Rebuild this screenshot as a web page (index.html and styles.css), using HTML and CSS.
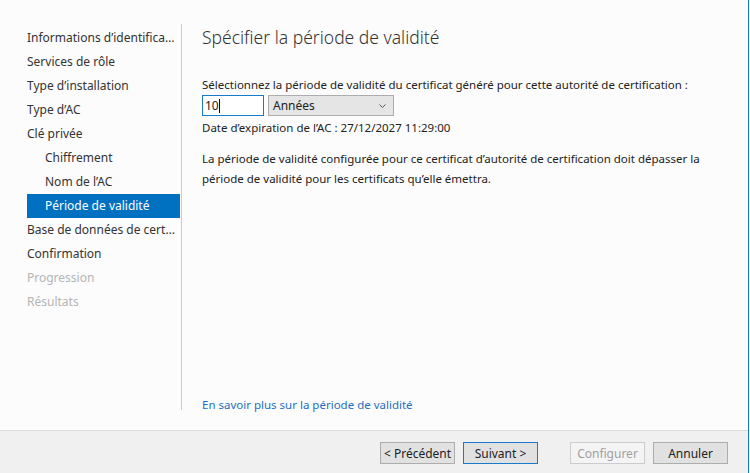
FILE: index.html
```html
<!DOCTYPE html>
<html lang="fr">
<head>
    <meta charset="UTF-8">
    <title>Configuration AD CS</title>
    <link rel="stylesheet" href="styles.css">
</head>
<body>
    <div class="wizard">
        <div class="content">
            <ul class="nav">
                <li class="nav-item">Informations d’identification</li>
                <li class="nav-item">Services de rôle</li>
                <li class="nav-item">Type d’installation</li>
                <li class="nav-item">Type d’AC</li>
                <li class="nav-item">Clé privée</li>
                <li class="nav-item sub">Chiffrement</li>
                <li class="nav-item sub">Nom de l’AC</li>
                <li class="nav-item sub active">Période de validité</li>
                <li class="nav-item">Base de données de certificats</li>
                <li class="nav-item">Confirmation</li>
                <li class="nav-item disabled">Progression</li>
                <li class="nav-item disabled">Résultats</li>
            </ul>

            <div class="main">
                <h1 class="title">Spécifier la période de validité</h1>

                <p class="label">Sélectionnez la période de validité du certificat généré pour cette autorité de certification :</p>
                <div class="period-row">
                    <div class="period-input">10<span class="caret"></span></div>
                    <div class="period-select">
                        <span>Années</span>
                        <svg class="chevron" width="7" height="4" viewBox="0 0 7 4"><path d="M0.5 0.5 L3.5 3.5 L6.5 0.5" fill="none" stroke="#555" stroke-width="1"/></svg>
                    </div>
                </div>
                <p class="expiry">Date d’expiration de l’AC : 27/12/2027 11:29:00</p>

                <p class="note">La période de validité configurée pour ce certificat d’autorité de certification doit dépasser la période de validité pour les certificats qu’elle émettra.</p>

                <a class="more-link" href="#">En savoir plus sur la période de validité</a>
            </div>
        </div>

        <div class="footer">
            <button class="btn">&lt; Précédent</button>
            <button class="btn default">Suivant &gt;</button>
            <button class="btn gap disabled">Configurer</button>
            <button class="btn">Annuler</button>
        </div>
    </div>
</body>
</html>
```

FILE: styles.css
```css
* {
    margin: 0;
    padding: 0;
    box-sizing: border-box;
    font-family: 'Noto Sans', sans-serif;
}

body {
    width: 750px;
    height: 473px;
    overflow: hidden;
    background-color: #fcfcfc;
}

.wizard {
    width: 749px;
    height: 473px;
    border-right: 1px solid #1979ca;
    display: flex;
    flex-direction: column;
}

.content {
    height: 430px;
    display: flex;
    background-color: #fcfcfc;
}

/* Left step list */
.nav {
    list-style: none;
    width: 182px;
    margin-top: 24px;
    height: 386px;
    padding: 2px 1px 0 27px;
    border-right: 1px solid #cccccc;
}

.nav-item {
    height: 24px;
    line-height: 24px;
    font-size: 12px;
    color: #333333;
    white-space: nowrap;
    overflow: hidden;
    text-overflow: ellipsis;
    padding-right: 3px;
}

.nav-item.sub {
    padding-left: 18px;
}

.nav-item.active {
    background-color: #0070c0;
    color: #ffffff;
}

.nav-item.disabled {
    color: #b4b4b4;
}

/* Page body */
.main {
    flex: 1;
    padding: 24px 0 0 20px;
    display: flex;
    flex-direction: column;
}

.title {
    font-size: 17.5px;
    font-weight: 300;
    color: #333333;
    line-height: 26px;
    margin-bottom: 25px;
}

.label, .expiry, .note {
    font-size: 11.5px;
    color: #222222;
    line-height: 20px;
}

.period-row {
    display: flex;
    gap: 4px;
    margin: 0 0 2px;
}

.period-input {
    width: 62px;
    height: 21px;
    border: 1px solid #1979ca;
    background-color: #ffffff;
    font-size: 12px;
    line-height: 19px;
    padding-left: 2px;
    color: #222222;
    display: flex;
    align-items: center;
}

.caret {
    width: 1px;
    height: 14px;
    background-color: #000000;
}

.period-select {
    width: 126px;
    height: 21px;
    border: 1px solid #adadad;
    background-color: #e5e5e5;
    font-size: 12px;
    color: #222222;
    display: flex;
    align-items: center;
    justify-content: space-between;
    padding: 0 7px 0 4px;
}

.note {
    margin-top: 11px;
    width: 500px;
}

.more-link {
    margin-top: auto;
    margin-bottom: 18px;
    font-size: 11.5px;
    color: #1c6fc0;
    text-decoration: none;
}

/* Bottom buttons */
.footer {
    flex: 1;
    background-color: #f0f0f0;
    border-top: 1px solid #dadada;
    display: flex;
    align-items: flex-start;
    padding: 11px 0 0 380px;
    gap: 8px;
}

.btn {
    width: 75px;
    height: 22px;
    border: 1px solid #adadad;
    background-color: #e1e1e1;
    font-size: 12px;
    color: #222222;
}

.btn.default {
    border-color: #1979ca;
}

.btn.gap {
    margin-left: 24px;
}

.btn.disabled {
    border-color: #cccccc;
    background-color: #f4f4f4;
    color: #a0a0a0;
}
```
